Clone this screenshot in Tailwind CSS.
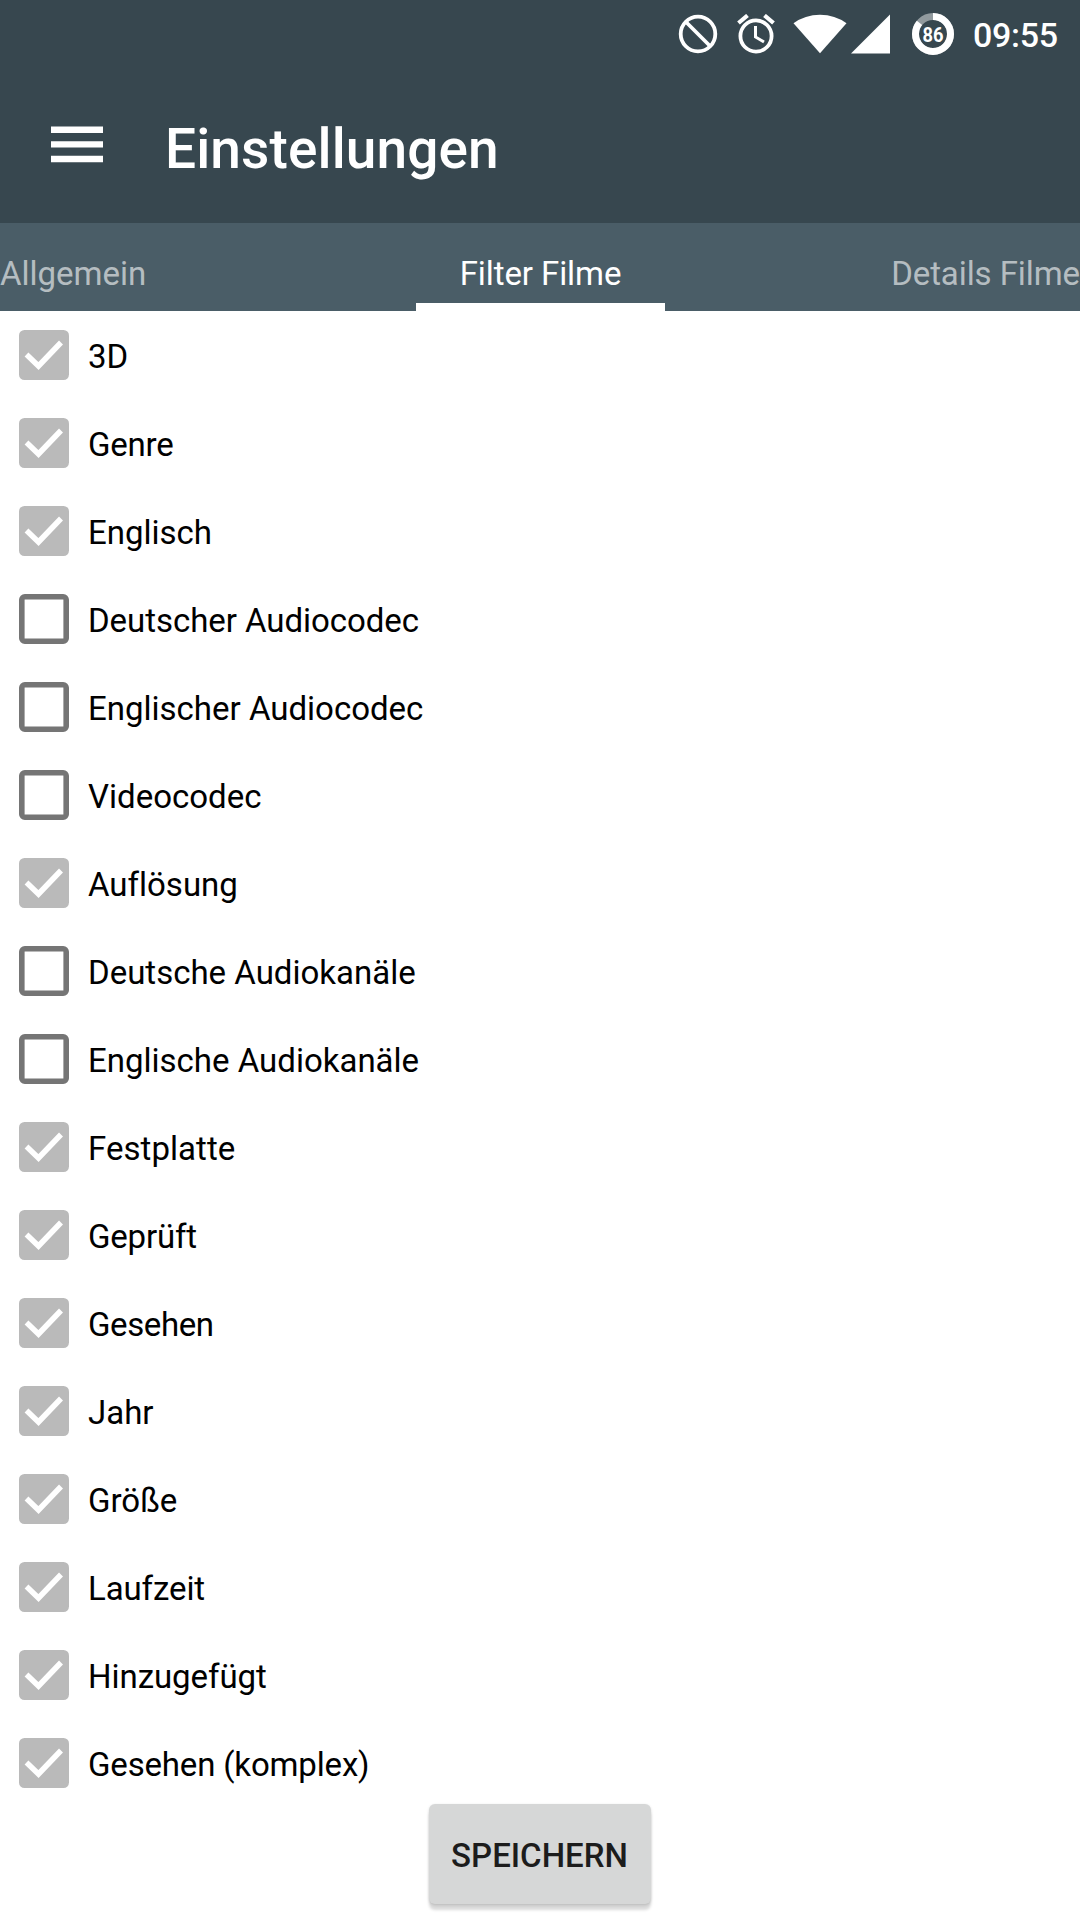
<!DOCTYPE html>
<html lang="de">
<head>
<meta charset="utf-8">
<title>Einstellungen</title>
<script src="https://cdn.jsdelivr.net/npm/@tailwindcss/browser@4"></script>
</head>
<body class="h-[1920px] w-[1080px] overflow-hidden bg-white font-['Roboto',sans-serif]">
<header class="h-[223px] bg-[#37474f] text-white">
  <div class="flex h-[68px] items-center justify-end pr-[22px]">
    <svg class="mr-[17px] h-[40px] w-[40px]" viewBox="0 0 40 40" fill="none" stroke="#fff" stroke-width="3.8"><circle cx="20" cy="20" r="17.3"/><path d="M8 8l24 24"/></svg>
    <svg class="mr-[18px] h-[40px] w-[40px]" viewBox="0 0 40 40" fill="none" stroke="#fff"><circle cx="21" cy="22" r="15.6" stroke-width="3.8"/><path d="M20.5 12v11l8.500 5" stroke-width="3"/><path d="M3.500 9l9-7.500M38.500 9l-9-7.500" stroke-width="4.200"/></svg>
    <svg class="mr-[4px] h-[40px] w-[54px]" viewBox="0 0 54 40" fill="#fff"><path d="M0.500 9.300Q12 .7 27 .7T53.500 9.300L27 39.300z"/></svg>
    <svg class="mr-[21px] h-[40px] w-[40px]" viewBox="0 0 40 40" fill="#fff"><path d="M0 39.500L39 .5v39z"/></svg>
    <svg class="mr-[19px] h-[42px] w-[42px]" viewBox="0 0 42 42" fill="none"><circle cx="21" cy="21" r="17.500" stroke="#fff" stroke-opacity=".45" stroke-width="7"/><circle cx="21" cy="21" r="17.500" stroke="#fff" stroke-width="7" pathLength="100" stroke-dasharray="86 14" transform="rotate(-90 21 21)"/><text x="21" y="28.500" text-anchor="middle" font-size="21" font-weight="700" fill="#fff" textLength="21" lengthAdjust="spacingAndGlyphs">86</text></svg>
    <span class="w-[85px] pt-[2px] text-[34px] leading-[40px] font-medium tracking-[-0.3px]">09:55</span>
  </div>
  <div class="flex h-[155px] items-start">
    <svg class="mt-[58px] ml-[51px] h-[37px] w-[52px]" viewBox="0 0 52 37" fill="#fff"><path d="M0 .6h52v6.400H0zM0 15.200h52v6.400H0zM0 29.800h52v6.400H0z"/></svg>
    <h1 class="mt-[49px] ml-[62px] text-[55px] leading-[64px] font-medium tracking-[0.12px]">Einstellungen</h1>
  </div>
</header>
<nav class="flex h-[88px] justify-between bg-[#4a5d67] text-[33px] leading-[40px] text-white/60">
  <span class="w-[415px] pt-[31px]">Allgemein</span>
  <span class="w-[249px] border-b-8 border-white pt-[31px] pl-px text-center tracking-[-0.08px] text-white">Filter Filme</span>
  <span class="w-[415px] pt-[31px] text-right tracking-[-0.08px]">Details Filme</span>
</nav>
<main>
  <ul id="filters" class="text-[33px] leading-[40px] text-black [font-variant-ligatures:none]"></ul>
  <button class="mx-auto -mt-[3px] block h-[100px] w-[222px] rounded-[6px] bg-[#d6d7d7] pt-[3px] pr-px text-[33px] leading-[40px] font-medium text-[#1c1c1c] shadow-[0_6px_3px_rgba(0,0,0,0.15),0_1px_3px_rgba(0,0,0,0.15)]">SPEICHERN</button>
</main>
<script>
// Label, checked state, letter spacing in px
const filters = [['3D',1,0],['Genre',1,-0.2],['Englisch',1,0],['Deutscher Audiocodec',0,-0.05],['Englischer Audiocodec',0,0],['Videocodec',0,0],['Auflösung',1,0],['Deutsche Audiokanäle',0,0],['Englische Audiokanäle',0,0],['Festplatte',1,0.05],['Geprüft',1,-0.2],['Gesehen',1,-0.4],['Jahr',1,0],['Größe',1,0],['Laufzeit',1,-0.1],['Hinzugefügt',1,-0.05],['Gesehen (komplex)',1,-0.17]];
const checked = '<svg class="h-[50px] w-[50px]" viewBox="0 0 50 50"><rect width="50" height="50" rx="5.500" fill="#bababa"/><path d="M7.500 24.500L19.500 36L42 12.500" fill="none" stroke="#fff" stroke-width="5.500"/></svg>';
const empty = '<svg class="h-[50px] w-[50px]" viewBox="0 0 50 50"><rect x="2.800" y="2.800" width="44.400" height="44.400" rx="3" fill="none" stroke="#757575" stroke-width="5.600"/></svg>';
document.getElementById('filters').innerHTML = filters.map(([name, on, spacing]) => `<li class="flex h-[88px] items-center gap-[19px] pl-[19px]">${on ? checked : empty}<span class="pt-[3px]" style="letter-spacing:${spacing}px">${name}</span></li>`).join('');
</script>
</body>
</html>
